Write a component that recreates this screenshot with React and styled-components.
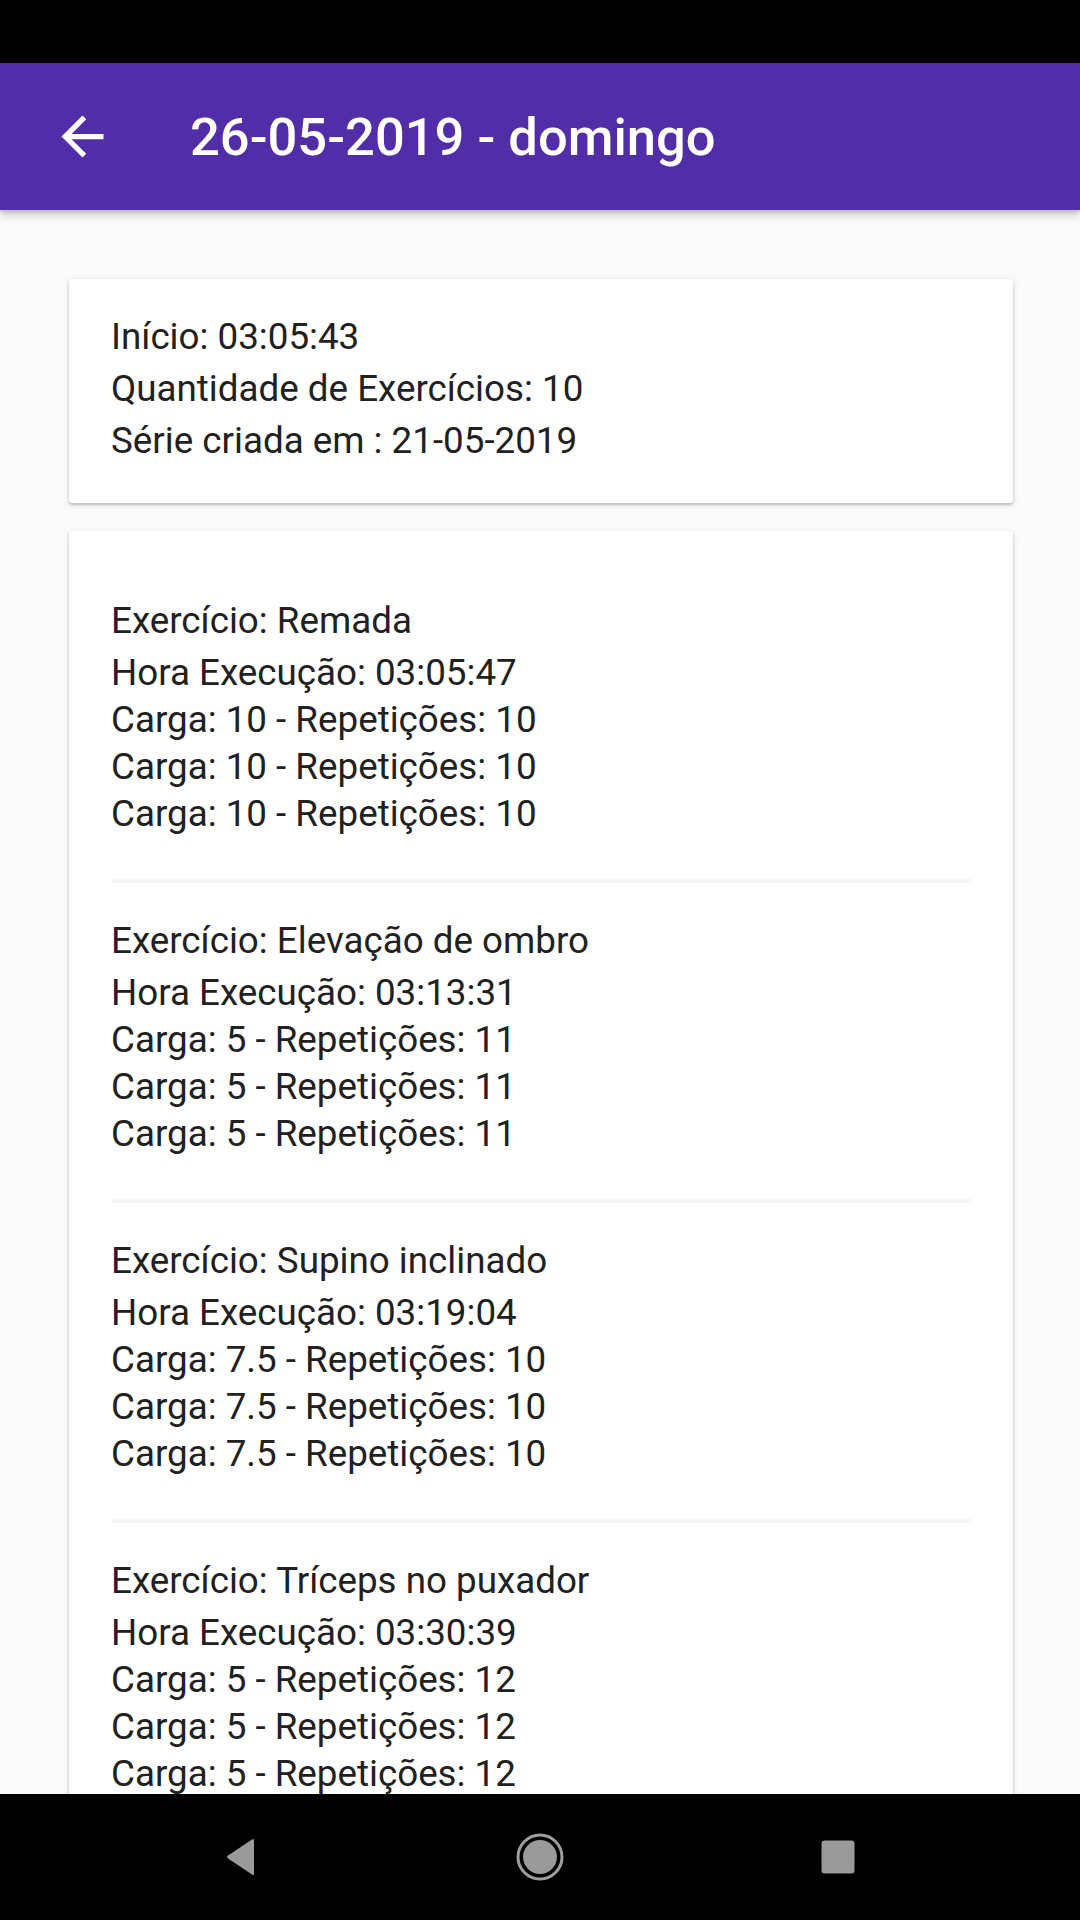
import styled, { createGlobalStyle } from "styled-components";

const GlobalStyle = createGlobalStyle`
    html, body {
        margin: 0;
        padding: 0;
        background-color: #000;
    }

    * {
        box-sizing: border-box;
    }
`;

const workout = {
    date: "26-05-2019 - domingo",
    start: "03:05:43",
    count: 10,
    created: "21-05-2019",
    exercises: [
        { name: "Remada", time: "03:05:47", sets: [[10, 10], [10, 10], [10, 10]] },
        { name: "Elevação de ombro", time: "03:13:31", sets: [[5, 11], [5, 11], [5, 11]] },
        { name: "Supino inclinado", time: "03:19:04", sets: [[7.5, 10], [7.5, 10], [7.5, 10]] },
        { name: "Tríceps no puxador", time: "03:30:39", sets: [[5, 12], [5, 12], [5, 12]] },
    ],
};

const Screen = styled.div`
    width: 1080px;
    height: 1920px;
    display: flex;
    flex-direction: column;
    overflow: hidden;
    background-color: #fafafa;
    font-family: Roboto, "Noto Sans", sans-serif;
`;

const StatusBar = styled.div`
    height: 63px;
    flex-shrink: 0;
    background-color: #000;
`;

const AppBar = styled.header`
    height: 147px;
    flex-shrink: 0;
    display: flex;
    align-items: center;
    padding-left: 51px;
    background-color: #512da8;
    box-shadow: 0 4px 10px rgba(0, 0, 0, 0.22), 0 2px 4px rgba(0, 0, 0, 0.12);
    position: relative;
    z-index: 2;
`;

const BackButton = styled.button`
    width: 63px;
    height: 63px;
    padding: 0;
    border: none;
    background: transparent;
    display: flex;
    align-items: center;
    justify-content: center;
    cursor: pointer;

    svg {
        width: 63px;
        height: 63px;
    }
`;

const Title = styled.h1`
    margin: 0 0 0 76px;
    color: #fff;
    font-size: 52.5px;
    font-weight: 500;
    letter-spacing: 0;
`;

const Content = styled.main`
    flex: 1;
    overflow: hidden;
    display: flex;
    flex-direction: column;
    gap: 28px;
    padding: 69px 67px 0 69px;
`;

const Card = styled.section`
    background-color: #fff;
    border-radius: 3px;
    box-shadow: 0 2px 3px rgba(0, 0, 0, 0.2), 0 1px 6px rgba(0, 0, 0, 0.1);
    padding: ${({ $list }) => ($list ? "32px 42px 0" : "32px 42px 36px")};
    flex-shrink: 0;
`;

const Line = styled.p`
    margin: 0;
    color: #212121;
    font-size: 36.75px;
    line-height: ${({ $tight }) => ($tight ? "47px" : "52px")};
    margin-bottom: ${({ $gap }) => ($gap ? "5px" : "0")};
    white-space: nowrap;
`;

const Exercise = styled.div`
    padding: 34px 0 41px;
`;

const Divider = styled.hr`
    margin: 0;
    border: none;
    height: 5px;
    background-color: #f6f6f6;
`;

const NavBar = styled.nav`
    height: 126px;
    flex-shrink: 0;
    display: flex;
    justify-content: center;
    align-items: center;
    background-color: #000;
`;

const NavButton = styled.div`
    width: 298px;
    display: flex;
    justify-content: center;
    align-items: center;
`;

const ArrowBack = () => (
    <svg viewBox="0 0 24 24" fill="#fff">
        <path d="M20 11H7.83l5.59-5.59L12 4l-8 8 8 8 1.41-1.41L7.83 13H20v-2z" />
    </svg>
);

const App = () => {
    return (
        <Screen>
            <GlobalStyle />
            <StatusBar />

            <AppBar>
                <BackButton aria-label="Voltar">
                    <ArrowBack />
                </BackButton>
                <Title>{workout.date}</Title>
            </AppBar>

            <Content>
                <Card>
                    <Line>Início: {workout.start}</Line>
                    <Line>Quantidade de Exercícios: {workout.count}</Line>
                    <Line>Série criada em : {workout.created}</Line>
                </Card>

                <Card $list>
                    {workout.exercises.map((ex, i) => (
                        <div key={ex.name}>
                            {i > 0 && <Divider />}
                            <Exercise>
                                <Line $tight $gap>Exercício: {ex.name}</Line>
                                <Line $tight>Hora Execução: {ex.time}</Line>
                                {ex.sets.map(([load, reps], j) => (
                                    <Line $tight key={j}>
                                        Carga: {load} - Repetições: {reps}
                                    </Line>
                                ))}
                            </Exercise>
                        </div>
                    ))}
                </Card>
            </Content>

            {/* barra de navegação do android */}
            <NavBar>
                <NavButton>
                    <svg width="34" height="38" viewBox="0 0 34 38">
                        <path
                            d="M29 2.5 L29 35.5 Q29 38 27 36.6 L3 20.4 Q1 19 3 17.6 L27 1.4 Q29 0 29 2.5 Z"
                            fill="#9a9a9a"
                        />
                    </svg>
                </NavButton>
                <NavButton>
                    <svg width="48" height="48" viewBox="0 0 48 48">
                        <circle cx="24" cy="24" r="22" fill="none" stroke="#9e9e9e" strokeWidth="3" />
                        <circle cx="24" cy="24" r="17" fill="#9a9a9a" />
                    </svg>
                </NavButton>
                <NavButton>
                    <svg width="34" height="34" viewBox="0 0 34 34">
                        <rect x="0.5" y="0.5" width="33" height="33" rx="3" fill="#9a9a9a" />
                    </svg>
                </NavButton>
            </NavBar>
        </Screen>
    );
};

export default App;
